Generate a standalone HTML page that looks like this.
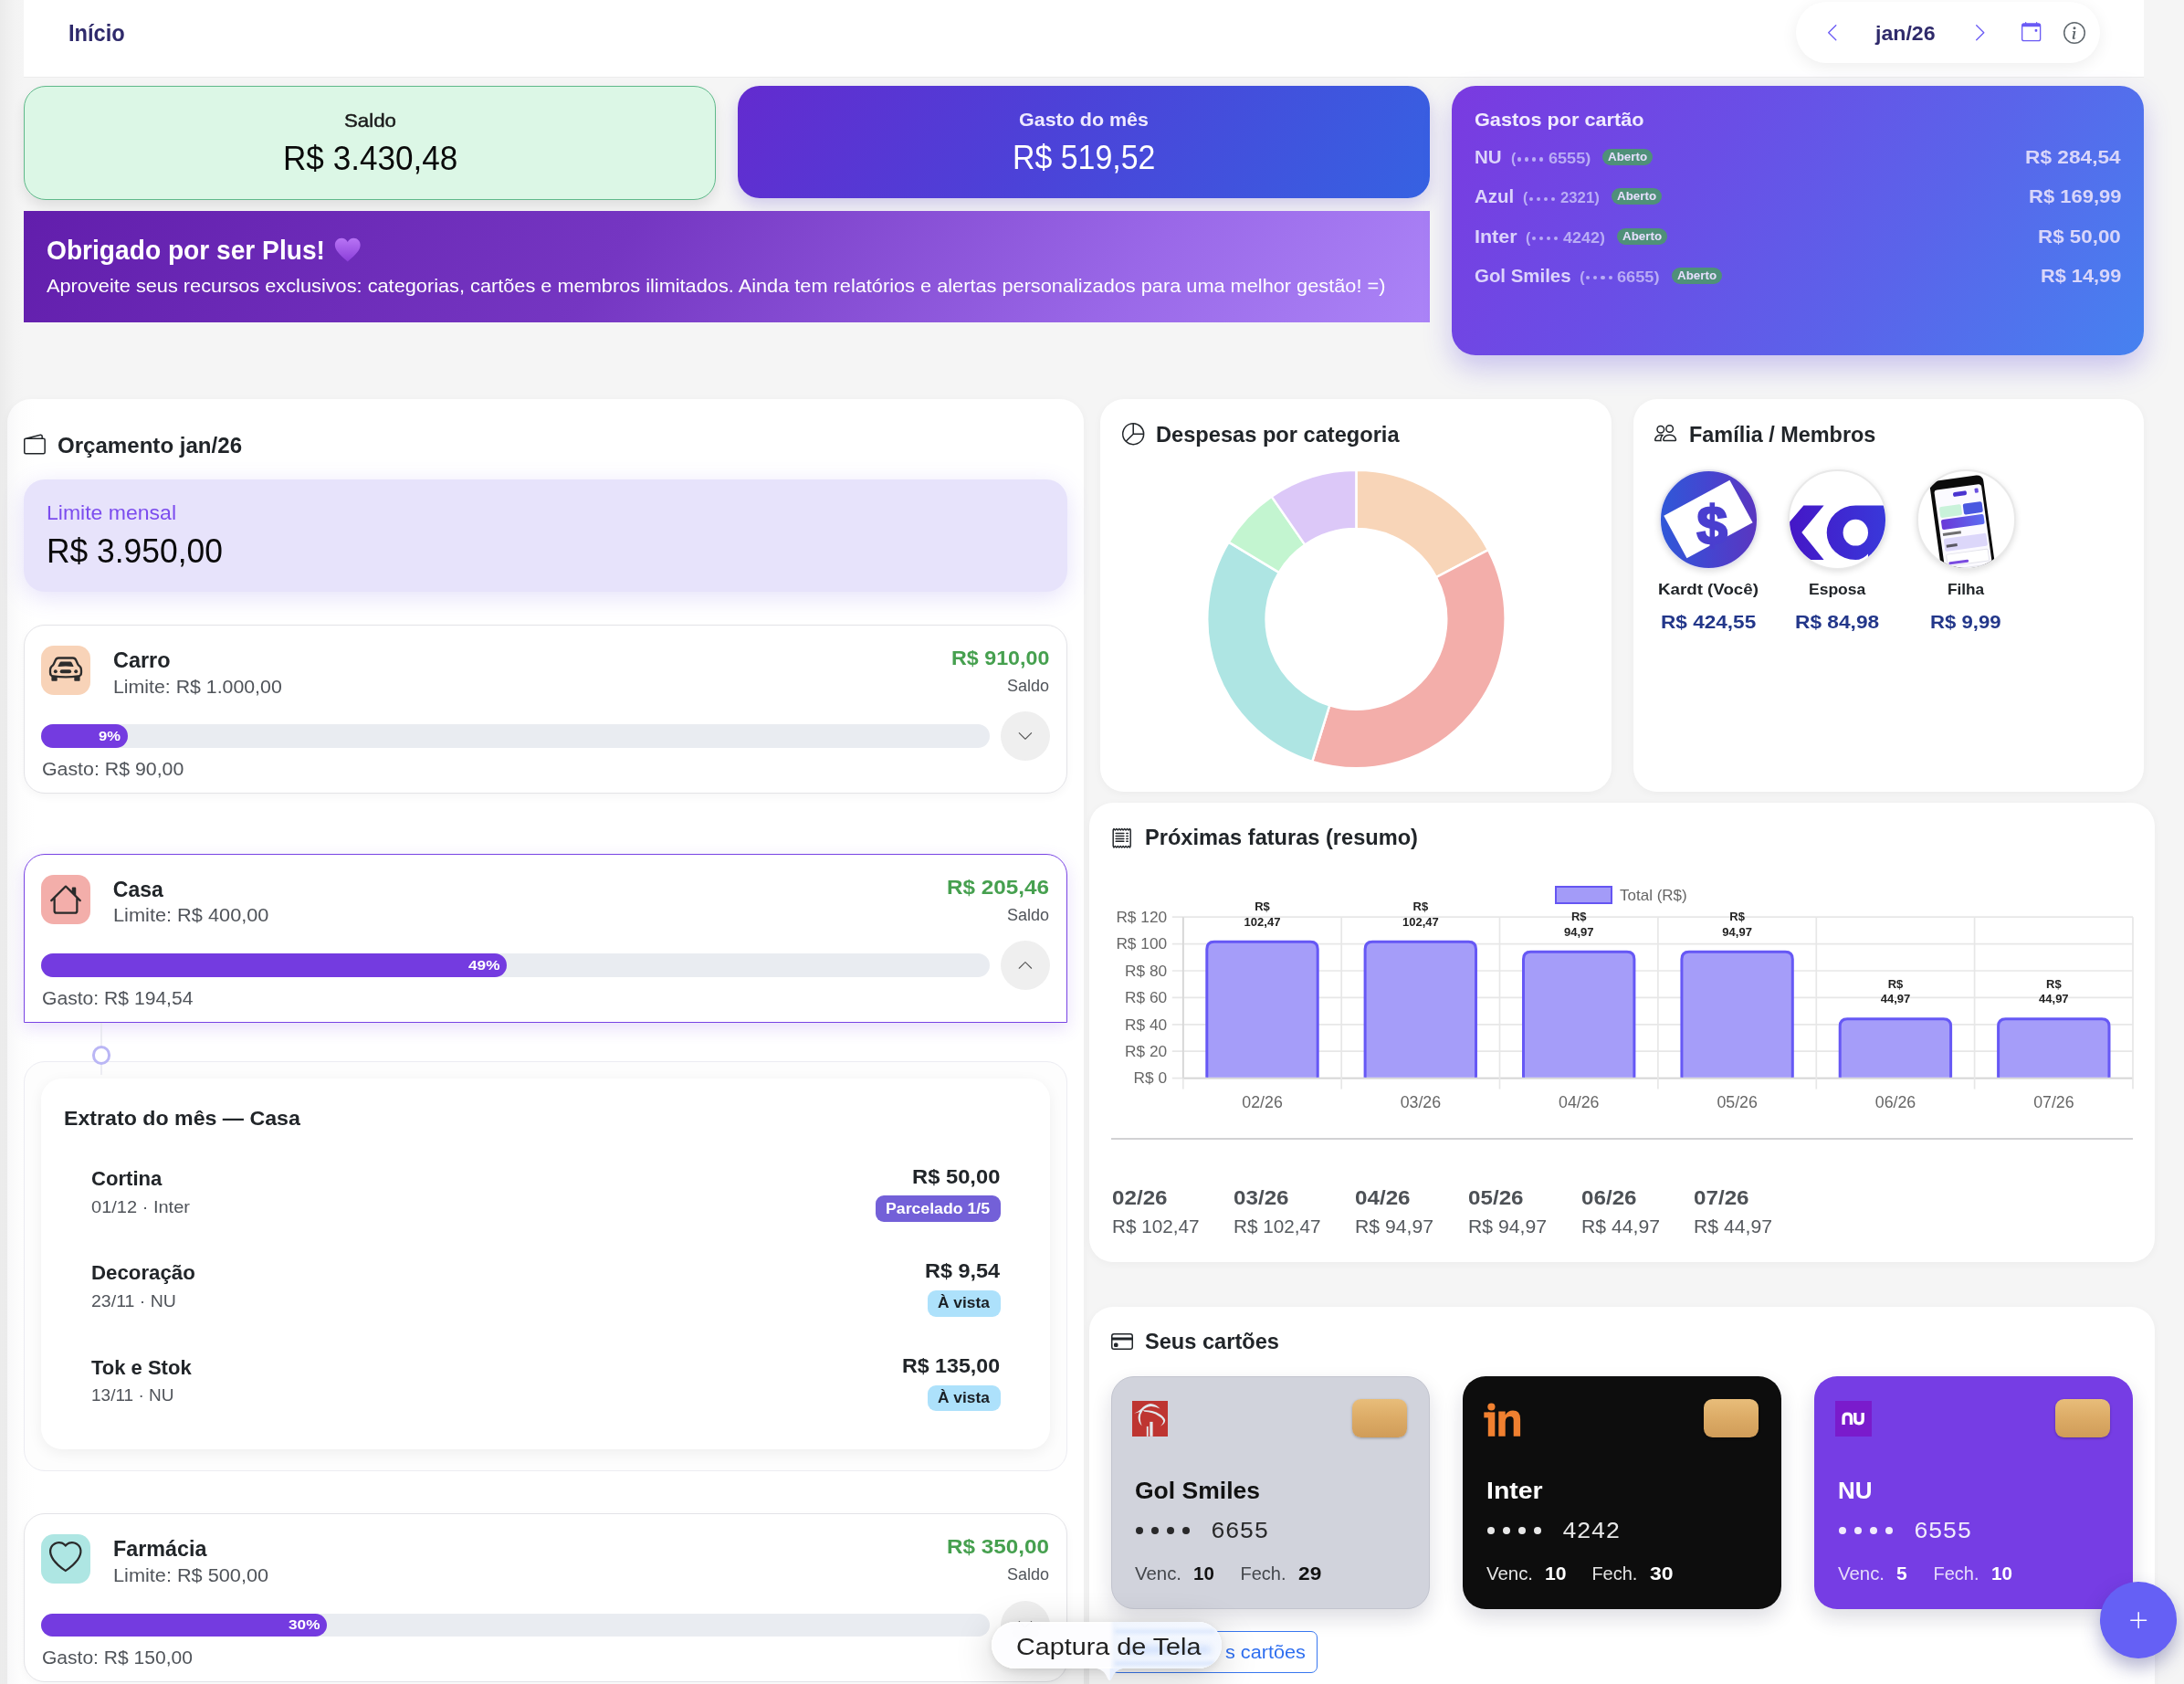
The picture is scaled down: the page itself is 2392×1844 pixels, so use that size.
<!DOCTYPE html>
<html lang="pt-BR"><head><meta charset="utf-8"><title>Inicio</title><style>
*{box-sizing:border-box;margin:0;padding:0}
html,body{width:2392px;height:1844px;overflow:hidden;background:#f5f5f5}
body{font-family:"Liberation Sans",sans-serif;position:relative;will-change:transform}
.t{position:absolute;white-space:nowrap}
.b{position:absolute}
svg{position:absolute;overflow:visible}
</style></head><body>
<div class="b" style="left:0px;top:0px;width:26px;height:1844px;background:linear-gradient(90deg,#ebebeb 0%,#f3f3f3 60%,#f5f5f5 100%);"></div>
<div class="b" style="left:26px;top:0px;width:2322px;height:84.5px;background:#fff;border-bottom:1.5px solid #ececec;"></div>
<div class="t" style="left:74.70px;top:19.30px;font-size:26px;font-weight:700;color:#2f2a6b;line-height:34px;transform:scaleX(0.9105);transform-origin:0 50%;">Início</div>
<div class="b" style="left:1967px;top:2px;width:333px;height:67px;background:#fff;border-radius:34px;box-shadow:0 4px 18px rgba(0,0,0,.07);"></div>
<svg style="left:1995.6px;top:24.5px" width="21.5" height="21.5" viewBox="0 0 16 16" fill="#6a5af5"><path fill-rule="evenodd" d="M11.354 1.646a.5.5 0 0 1 0 .708L5.707 8l5.647 5.646a.5.5 0 0 1-.708.708l-6-6a.5.5 0 0 1 0-.708l6-6a.5.5 0 0 1 .708 0"/></svg>
<div class="t" style="left:2053.98px;top:22.20px;font-size:22.6px;font-weight:700;color:#2f2a6b;line-height:29px;transform:scaleX(1.0233);transform-origin:0 50%;">jan/26</div>
<svg style="left:2157.5px;top:24.5px" width="21.5" height="21.5" viewBox="0 0 16 16" fill="#6a5af5"><path fill-rule="evenodd" d="M4.646 1.646a.5.5 0 0 1 .708 0l6 6a.5.5 0 0 1 0 .708l-6 6a.5.5 0 0 1-.708-.708L10.293 8 4.646 2.354a.5.5 0 0 1 0-.708"/></svg>
<svg style="left:2213.7px;top:24.4px" width="21.3" height="21.3" viewBox="0 0 16 16" fill="#6a5af5"><path d="M11 6.5a.5.5 0 0 1 .5-.5h1a.5.5 0 0 1 .5.5v1a.5.5 0 0 1-.5.5h-1a.5.5 0 0 1-.5-.5z"/><path d="M3.5 0a.5.5 0 0 1 .5.5V1h8V.5a.5.5 0 0 1 1 0V1h1a2 2 0 0 1 2 2v11a2 2 0 0 1-2 2H2a2 2 0 0 1-2-2V3a2 2 0 0 1 2-2h1V.5a.5.5 0 0 1 .5-.5M1 4v10a1 1 0 0 0 1 1h12a1 1 0 0 0 1-1V4z"/></svg>
<svg style="left:2260px;top:24px" width="24" height="24" viewBox="0 0 16 16" fill="#5f676d"><path d="M8 15A7 7 0 1 1 8 1a7 7 0 0 1 0 14m0 1A8 8 0 1 0 8 0a8 8 0 0 0 0 16"/><path d="m8.93 6.588-2.29.287-.082.38.45.083c.294.07.352.176.288.469l-.738 3.468c-.194.897.105 1.319.808 1.319.545 0 1.178-.252 1.465-.598l.088-.416c-.2.176-.492.246-.686.246-.275 0-.375-.193-.304-.533zM9 4.5a1 1 0 1 1-2 0 1 1 0 0 1 2 0"/></svg>
<div class="b" style="left:26px;top:94px;width:758px;height:124.5px;background:#dcf7e6;border:1.3px solid #5fb98a;border-radius:24px;box-shadow:0 7px 14px rgba(0,0,0,.09);"></div>
<div class="t" style="left:376.70px;top:117.70px;font-size:21px;font-weight:400;color:#1a1a1a;line-height:27px;transform:scaleX(1.0605);transform-origin:0 50%;-webkit-text-stroke:.45px #1a1a1a;">Saldo</div>
<div class="t" style="left:309.55px;top:150.00px;font-size:36px;font-weight:400;color:#0a0a0a;line-height:47px;transform:scaleX(0.9754);transform-origin:0 50%;">R$ 3.430,48</div>
<div class="b" style="left:808px;top:94px;width:758px;height:122.5px;background:linear-gradient(125deg,#632bcf 0%,#4c42d8 45%,#3662e2 100%);border-radius:24px;box-shadow:0 8px 18px rgba(80,60,200,.22);"></div>
<div class="t" style="left:1116.20px;top:116.80px;font-size:21px;font-weight:700;color:#eee9ff;line-height:27px;transform:scaleX(1.0225);transform-origin:0 50%;">Gasto do mês</div>
<div class="t" style="left:1109.05px;top:149.20px;font-size:36px;font-weight:400;color:#fff;line-height:47px;transform:scaleX(0.9409);transform-origin:0 50%;">R$ 519,52</div>
<div class="b" style="left:26px;top:231px;width:1540px;height:122px;background:linear-gradient(125deg,#621eac 0%,#7536c2 42%,#9a68e8 78%,#ab84f7 100%);"></div>
<div class="t" style="left:50.80px;top:254.00px;font-size:30px;font-weight:700;color:#fff;line-height:39px;transform:scaleX(0.9381);transform-origin:0 50%;">Obrigado por ser Plus!</div>
<svg style="left:365.5px;top:260px" width="29.5" height="27" viewBox="0 0 29 27"><defs><linearGradient id="hg" x1="0" y1="0" x2="0" y2="1"><stop offset="0" stop-color="#b874f5"/><stop offset="1" stop-color="#8b3fd9"/></linearGradient></defs><path d="M14.5 26.4 C5 18.4 0.6 13.5 0.6 8.2 C0.6 4 3.8 0.8 7.8 0.8 C10.6 0.8 13.2 2.4 14.5 4.9 C15.8 2.4 18.4 0.8 21.2 0.8 C25.2 0.8 28.4 4 28.4 8.2 C28.4 13.5 24 18.4 14.5 26.4Z" fill="url(#hg)"/></svg>
<div class="t" style="left:50.50px;top:299.40px;font-size:21px;font-weight:400;color:#fff;line-height:27px;transform:scaleX(1.0353);transform-origin:0 50%;">Aproveite seus recursos exclusivos: categorias, cartões e membros ilimitados. Ainda tem relatórios e alertas personalizados para uma melhor gestão! =)</div>
<div class="b" style="left:1590px;top:94px;width:758px;height:295px;background:linear-gradient(125deg,#7a3ae0 0%,#6a4ee6 35%,#5a64ea 65%,#4682f0 100%);border-radius:26px;box-shadow:0 14px 30px rgba(90,70,220,.28);"></div>
<div class="t" style="left:1614.50px;top:117.20px;font-size:21px;font-weight:700;color:#f0ebff;line-height:27px;transform:scaleX(1.0320);transform-origin:0 50%;">Gastos por cartão</div>
<div class="t" style="left:1614.50px;top:158.10px;font-size:21px;font-weight:700;color:#dcd3fb;line-height:27px;transform:scaleX(0.9778);transform-origin:0 50%;">NU</div>
<div class="t" style="left:1654.90px;top:163.10px;font-size:16px;font-weight:700;color:#b9acf5;line-height:21px;">(</div>
<div class="b" style="left:1661.9px;top:172.4px;width:4.2px;height:4.2px;background:#b9acf5;border-radius:50%;"></div>
<div class="b" style="left:1670.0px;top:172.4px;width:4.2px;height:4.2px;background:#b9acf5;border-radius:50%;"></div>
<div class="b" style="left:1678.1000000000001px;top:172.4px;width:4.2px;height:4.2px;background:#b9acf5;border-radius:50%;"></div>
<div class="b" style="left:1686.2px;top:172.4px;width:4.2px;height:4.2px;background:#b9acf5;border-radius:50%;"></div>
<div class="t" style="left:1695.50px;top:163.10px;font-size:16px;font-weight:700;color:#b9acf5;line-height:21px;transform:scaleX(1.1303);transform-origin:0 50%;">6555)</div>
<div class="b" style="left:1755px;top:163.1px;width:55px;height:17.8px;background:#4f9079;border-radius:9px;"></div>
<div class="t" style="left:1761.00px;top:164.20px;font-size:12px;font-weight:700;color:#e8e0ff;line-height:16px;transform:scaleX(1.1133);transform-origin:0 50%;">Aberto</div>
<div class="t" style="left:2218.30px;top:158.10px;font-size:21px;font-weight:700;color:#d9d6fa;line-height:27px;transform:scaleX(1.0808);transform-origin:0 50%;">R$ 284,54</div>
<div class="t" style="left:1614.50px;top:201.20px;font-size:21px;font-weight:700;color:#dcd3fb;line-height:27px;transform:scaleX(0.9735);transform-origin:0 50%;">Azul</div>
<div class="t" style="left:1668.00px;top:206.20px;font-size:16px;font-weight:700;color:#b9acf5;line-height:21px;">(</div>
<div class="b" style="left:1675.0px;top:215.5px;width:4.2px;height:4.2px;background:#b9acf5;border-radius:50%;"></div>
<div class="b" style="left:1683.1px;top:215.5px;width:4.2px;height:4.2px;background:#b9acf5;border-radius:50%;"></div>
<div class="b" style="left:1691.2px;top:215.5px;width:4.2px;height:4.2px;background:#b9acf5;border-radius:50%;"></div>
<div class="b" style="left:1699.3px;top:215.5px;width:4.2px;height:4.2px;background:#b9acf5;border-radius:50%;"></div>
<div class="t" style="left:1708.60px;top:206.20px;font-size:16px;font-weight:700;color:#b9acf5;line-height:21px;transform:scaleX(1.0446);transform-origin:0 50%;">2321)</div>
<div class="b" style="left:1765px;top:206.2px;width:55px;height:17.8px;background:#4f9079;border-radius:9px;"></div>
<div class="t" style="left:1771.00px;top:207.30px;font-size:12px;font-weight:700;color:#e8e0ff;line-height:16px;transform:scaleX(1.1133);transform-origin:0 50%;">Aberto</div>
<div class="t" style="left:2221.50px;top:201.20px;font-size:21px;font-weight:700;color:#d9d6fa;line-height:27px;transform:scaleX(1.0477);transform-origin:0 50%;">R$ 169,99</div>
<div class="t" style="left:1614.50px;top:245.00px;font-size:21px;font-weight:700;color:#dcd3fb;line-height:27px;transform:scaleX(1.0220);transform-origin:0 50%;">Inter</div>
<div class="t" style="left:1671.00px;top:250.00px;font-size:16px;font-weight:700;color:#b9acf5;line-height:21px;">(</div>
<div class="b" style="left:1678.0px;top:259.29999999999995px;width:4.2px;height:4.2px;background:#b9acf5;border-radius:50%;"></div>
<div class="b" style="left:1686.1px;top:259.29999999999995px;width:4.2px;height:4.2px;background:#b9acf5;border-radius:50%;"></div>
<div class="b" style="left:1694.2px;top:259.29999999999995px;width:4.2px;height:4.2px;background:#b9acf5;border-radius:50%;"></div>
<div class="b" style="left:1702.3px;top:259.29999999999995px;width:4.2px;height:4.2px;background:#b9acf5;border-radius:50%;"></div>
<div class="t" style="left:1711.60px;top:250.00px;font-size:16px;font-weight:700;color:#b9acf5;line-height:21px;transform:scaleX(1.1205);transform-origin:0 50%;">4242)</div>
<div class="b" style="left:1771px;top:250.0px;width:55px;height:17.8px;background:#4f9079;border-radius:9px;"></div>
<div class="t" style="left:1777.00px;top:251.10px;font-size:12px;font-weight:700;color:#e8e0ff;line-height:16px;transform:scaleX(1.1133);transform-origin:0 50%;">Aberto</div>
<div class="t" style="left:2232.20px;top:245.00px;font-size:21px;font-weight:700;color:#d9d6fa;line-height:27px;transform:scaleX(1.0651);transform-origin:0 50%;">R$ 50,00</div>
<div class="t" style="left:1614.50px;top:288.00px;font-size:21px;font-weight:700;color:#dcd3fb;line-height:27px;transform:scaleX(0.9724);transform-origin:0 50%;">Gol Smiles</div>
<div class="t" style="left:1730.20px;top:293.00px;font-size:16px;font-weight:700;color:#b9acf5;line-height:21px;">(</div>
<div class="b" style="left:1737.2px;top:302.29999999999995px;width:4.2px;height:4.2px;background:#b9acf5;border-radius:50%;"></div>
<div class="b" style="left:1745.3px;top:302.29999999999995px;width:4.2px;height:4.2px;background:#b9acf5;border-radius:50%;"></div>
<div class="b" style="left:1753.4px;top:302.29999999999995px;width:4.2px;height:4.2px;background:#b9acf5;border-radius:50%;"></div>
<div class="b" style="left:1761.5px;top:302.29999999999995px;width:4.2px;height:4.2px;background:#b9acf5;border-radius:50%;"></div>
<div class="t" style="left:1770.80px;top:293.00px;font-size:16px;font-weight:700;color:#b9acf5;line-height:21px;transform:scaleX(1.1352);transform-origin:0 50%;">6655)</div>
<div class="b" style="left:1831px;top:293.0px;width:55px;height:17.8px;background:#4f9079;border-radius:9px;"></div>
<div class="t" style="left:1837.00px;top:294.10px;font-size:12px;font-weight:700;color:#e8e0ff;line-height:16px;transform:scaleX(1.1133);transform-origin:0 50%;">Aberto</div>
<div class="t" style="left:2234.70px;top:288.00px;font-size:21px;font-weight:700;color:#d9d6fa;line-height:27px;transform:scaleX(1.0358);transform-origin:0 50%;">R$ 14,99</div>
<div class="b" style="left:8px;top:437px;width:1179.2px;height:1500px;background:linear-gradient(90deg,#f8f8f9 0,#fdfdfd 14px,#fff 30px);border-radius:26px;box-shadow:0 2px 10px rgba(0,0,0,.04);"></div>
<svg style="left:26.1px;top:475.1px" width="23.9" height="23.9" viewBox="0 0 16 16" fill="#212529"><path d="M12.136.326A1.5 1.5 0 0 1 14 1.78V3h.5A1.5 1.5 0 0 1 16 4.5v9a1.5 1.5 0 0 1-1.5 1.5h-13A1.5 1.5 0 0 1 0 13.5v-9a1.5 1.5 0 0 1 1.432-1.499zM5.562 3H13V1.78a.5.5 0 0 0-.621-.484zM1.5 4a.5.5 0 0 0-.5.5v9a.5.5 0 0 0 .5.5h13a.5.5 0 0 0 .5-.5v-9a.5.5 0 0 0-.5-.5z"/></svg>
<div class="t" style="left:63.10px;top:472.80px;font-size:23px;font-weight:700;color:#212529;line-height:30px;transform:scaleX(1.0466);transform-origin:0 50%;">Orçamento jan/26</div>
<div class="b" style="left:26px;top:525px;width:1143px;height:122.5px;background:#e7e3fb;border-radius:23px;box-shadow:0 6px 26px rgba(125,105,230,.2);"></div>
<div class="t" style="left:51.20px;top:548.00px;font-size:21.5px;font-weight:400;color:#7c4dee;line-height:28px;transform:scaleX(1.0707);transform-origin:0 50%;">Limite mensal</div>
<div class="t" style="left:51.20px;top:579.80px;font-size:36px;font-weight:400;color:#0a0a0a;line-height:47px;transform:scaleX(0.9830);transform-origin:0 50%;">R$ 3.950,00</div>
<div class="b" style="left:26px;top:684.2px;width:1143px;height:184.5px;background:#fff;border:1.3px solid #e3e3e7;border-radius:23px;box-shadow:0 4px 10px rgba(0,0,0,.035);"></div>
<div class="b" style="left:45px;top:707.0px;width:54px;height:54px;background:#f8d3b8;border-radius:14px;"><svg style="left:0;top:0" width="54" height="54" viewBox="0 0 54 54">
<path d="M19.1 13.5 H34.9 Q37.2 13.5 38.3 16 L40.2 20.2 Q40.8 21.5 42.4 22.7 Q44 24.1 44 27 V29.4 Q44 33 40.6 33.4 Q27 35.4 13.4 33.4 Q10 33 10 29.4 V27 Q10 24.1 11.6 22.7 Q13.2 21.5 13.8 20.2 L15.7 16 Q16.8 13.5 19.1 13.5Z" fill="none" stroke="#2d2d2d" stroke-width="2.3" stroke-linejoin="round"/>
<path d="M21.9 17.5 H32.1 Q33 17.5 33.4 18.3 L35.5 22.2 Q35.9 23.1 34.8 23 Q27 22 19.2 23 Q18.1 23.1 18.5 22.2 L20.6 18.3 Q21 17.5 21.9 17.5Z" fill="#2d2d2d"/>
<circle cx="15.8" cy="28.3" r="1.95" fill="#2d2d2d"/><circle cx="38.2" cy="28.3" r="1.95" fill="#2d2d2d"/>
<rect x="20.7" y="26.3" width="12.4" height="4" rx="2" fill="#2d2d2d"/>
<path d="M11.4 33.2 H17.7 V38.1 Q17.7 38.8 17 38.8 H12.1 Q11.4 38.8 11.4 38.1Z M36.3 33.2 H42.6 V38.1 Q42.6 38.8 41.9 38.8 H37 Q36.3 38.8 36.3 38.1Z" fill="#2d2d2d"/>
</svg></div>
<div class="t" style="left:123.80px;top:707.70px;font-size:23px;font-weight:700;color:#212529;line-height:30px;transform:scaleX(1.0183);transform-origin:0 50%;">Carro</div>
<div class="t" style="left:123.80px;top:737.60px;font-size:20.5px;font-weight:400;color:#50545a;line-height:27px;transform:scaleX(1.0391);transform-origin:0 50%;">Limite: R$ 1.000,00</div>
<div class="t" style="left:1041.60px;top:705.70px;font-size:22px;font-weight:700;color:#46a04f;line-height:29px;transform:scaleX(1.0581);transform-origin:0 50%;">R$ 910,00</div>
<div class="t" style="left:1103.00px;top:739.70px;font-size:18px;font-weight:400;color:#50545a;line-height:23px;">Saldo</div>
<div class="b" style="left:45px;top:793.4000000000001px;width:1039px;height:25.6px;background:#e9ecf1;border-radius:13px;"></div>
<div class="b" style="left:45px;top:793.4000000000001px;width:94.5px;height:25.6px;background:#743be0;border-radius:13px;"></div>
<div class="t" style="left:108.20px;top:796.90px;font-size:14.5px;font-weight:700;color:#fff;line-height:19px;transform:scaleX(1.1429);transform-origin:0 50%;">9%</div>
<div class="b" style="left:1096px;top:779.4000000000001px;width:54px;height:54px;background:#efefef;border-radius:50%;"></div>
<svg style="left:1114.1px;top:796.8000000000001px" width="17.85" height="17.85" viewBox="0 0 16 16" fill="#555"><path fill-rule="evenodd" d="M1.646 4.646a.5.5 0 0 1 .708 0L8 10.293l5.646-5.647a.5.5 0 0 1 .708.708l-6 6a.5.5 0 0 1-.708 0l-6-6a.5.5 0 0 1 0-.708"/></svg>
<div class="t" style="left:46.00px;top:828.00px;font-size:20.5px;font-weight:400;color:#50545a;line-height:27px;transform:scaleX(1.0405);transform-origin:0 50%;">Gasto: R$ 90,00</div>
<div class="b" style="left:26px;top:935px;width:1143px;height:184.5px;background:#fff;border:1.6px solid #7944e4;border-radius:23px 23px 0 0;box-shadow:0 6px 18px rgba(117,64,230,.17);"></div>
<div class="b" style="left:45px;top:957.8px;width:54px;height:54px;background:#f3aeaa;border-radius:14px;"><svg style="left:9.1px;top:9.2px" width="36" height="36" viewBox="0 0 16 16" fill="#2a2a2a"><path d="M8.707 1.5a1 1 0 0 0-1.414 0L.646 8.146a.5.5 0 0 0 .708.708L2 8.207V13.5A1.5 1.5 0 0 0 3.5 15h9a1.5 1.5 0 0 0 1.5-1.5V8.207l.646.647a.5.5 0 0 0 .708-.708L13 5.793V2.5a.5.5 0 0 0-.5-.5h-1a.5.5 0 0 0-.5.5v1.293zM13 7.207V13.5a.5.5 0 0 1-.5.5h-9a.5.5 0 0 1-.5-.5V7.207l5-5z"/></svg></div>
<div class="t" style="left:123.80px;top:958.50px;font-size:23px;font-weight:700;color:#212529;line-height:30px;">Casa</div>
<div class="t" style="left:123.80px;top:988.40px;font-size:20.5px;font-weight:400;color:#50545a;line-height:27px;transform:scaleX(1.0609);transform-origin:0 50%;">Limite: R$ 400,00</div>
<div class="t" style="left:1037.00px;top:956.50px;font-size:22px;font-weight:700;color:#46a04f;line-height:29px;transform:scaleX(1.1034);transform-origin:0 50%;">R$ 205,46</div>
<div class="t" style="left:1103.00px;top:990.50px;font-size:18px;font-weight:400;color:#50545a;line-height:23px;">Saldo</div>
<div class="b" style="left:45px;top:1044.2px;width:1039px;height:25.6px;background:#e9ecf1;border-radius:13px;"></div>
<div class="b" style="left:45px;top:1044.2px;width:509.5px;height:25.6px;background:#743be0;border-radius:13px;"></div>
<div class="t" style="left:512.80px;top:1047.70px;font-size:14.5px;font-weight:700;color:#fff;line-height:19px;transform:scaleX(1.1862);transform-origin:0 50%;">49%</div>
<div class="b" style="left:1096px;top:1030.2px;width:54px;height:54px;background:#efefef;border-radius:50%;"></div>
<svg style="left:1114.1px;top:1047.6px" width="17.85" height="17.85" viewBox="0 0 16 16" fill="#555"><path fill-rule="evenodd" d="M7.646 4.646a.5.5 0 0 1 .708 0l6 6a.5.5 0 0 1-.708.708L8 5.707l-5.646 5.647a.5.5 0 0 1-.708-.708z"/></svg>
<div class="t" style="left:46.00px;top:1078.80px;font-size:20.5px;font-weight:400;color:#50545a;line-height:27px;transform:scaleX(1.0297);transform-origin:0 50%;">Gasto: R$ 194,54</div>
<div class="b" style="left:26px;top:1162.3px;width:1143px;height:449px;background:#fdfdfd;border:1.3px solid #ececf2;border-radius:23px;"></div>
<div class="b" style="left:45px;top:1180.6px;width:1105px;height:406px;background:#fff;border-radius:23px;box-shadow:0 4px 16px rgba(0,0,0,.06);"></div>
<div class="b" style="left:109.8px;top:1119.5px;width:2.4px;height:26px;background:linear-gradient(180deg,#e6e6ee,#f0f0f5);"></div>
<div class="b" style="left:109.8px;top:1165px;width:2.4px;height:11.5px;background:#ececf2;"></div>
<div class="b" style="left:100.6px;top:1145.2px;width:20.8px;height:20.8px;background:#fff;border:3.2px solid #bab6f5;border-radius:50%;"></div>
<div class="t" style="left:70.00px;top:1209.50px;font-size:22.5px;font-weight:700;color:#212529;line-height:29px;transform:scaleX(1.0301);transform-origin:0 50%;">Extrato do mês — Casa</div>
<div class="t" style="left:100.00px;top:1275.80px;font-size:22px;font-weight:700;color:#212529;line-height:29px;transform:scaleX(1.0049);transform-origin:0 50%;">Cortina</div>
<div class="t" style="left:100.00px;top:1308.70px;font-size:19px;font-weight:400;color:#50545a;line-height:25px;transform:scaleX(1.0537);transform-origin:0 50%;">01/12 · Inter</div>
<div class="t" style="left:998.80px;top:1274.00px;font-size:22px;font-weight:700;color:#212529;line-height:29px;transform:scaleX(1.0790);transform-origin:0 50%;">R$ 50,00</div>
<div class="b" style="left:958.9px;top:1309.1px;width:137.2px;height:28.7px;background:#7360d8;border-radius:9px;"></div>
<div class="t" style="left:970.30px;top:1312.50px;font-size:16px;font-weight:700;color:#fff;line-height:21px;transform:scaleX(1.1055);transform-origin:0 50%;">Parcelado 1/5</div>
<div class="t" style="left:100.00px;top:1379.00px;font-size:22px;font-weight:700;color:#212529;line-height:29px;transform:scaleX(1.0116);transform-origin:0 50%;">Decoração</div>
<div class="t" style="left:100.00px;top:1411.90px;font-size:19px;font-weight:400;color:#50545a;line-height:25px;transform:scaleX(1.0276);transform-origin:0 50%;">23/11 · NU</div>
<div class="t" style="left:1013.10px;top:1377.20px;font-size:22px;font-weight:700;color:#212529;line-height:29px;transform:scaleX(1.0649);transform-origin:0 50%;">R$ 9,54</div>
<div class="b" style="left:1016.1px;top:1413.0px;width:80px;height:28.8px;background:#ade1fb;border-radius:9px;"></div>
<div class="t" style="left:1027.30px;top:1416.40px;font-size:16px;font-weight:700;color:#1a1f24;line-height:21px;transform:scaleX(1.0831);transform-origin:0 50%;">À vista</div>
<div class="t" style="left:100.00px;top:1482.50px;font-size:22px;font-weight:700;color:#212529;line-height:29px;">Tok e Stok</div>
<div class="t" style="left:100.00px;top:1515.40px;font-size:19px;font-weight:400;color:#50545a;line-height:25px;">13/11 · NU</div>
<div class="t" style="left:988.10px;top:1480.70px;font-size:22px;font-weight:700;color:#212529;line-height:29px;transform:scaleX(1.0542);transform-origin:0 50%;">R$ 135,00</div>
<div class="b" style="left:1016.1px;top:1516.5px;width:80px;height:28.8px;background:#ade1fb;border-radius:9px;"></div>
<div class="t" style="left:1027.30px;top:1519.90px;font-size:16px;font-weight:700;color:#1a1f24;line-height:21px;transform:scaleX(1.0831);transform-origin:0 50%;">À vista</div>
<div class="b" style="left:26px;top:1657.4px;width:1143px;height:184.5px;background:#fff;border:1.3px solid #e3e3e7;border-radius:23px;box-shadow:0 4px 10px rgba(0,0,0,.035);"></div>
<div class="b" style="left:45px;top:1680.2px;width:54px;height:54px;background:#aee6e3;border-radius:14px;"><svg style="left:9.3px;top:7.5px" width="35.6" height="35.6" viewBox="0 0 16 16"><path fill="#2a2a2a" fill-rule="evenodd" d="m8 2.748-.717-.737C5.6.281 2.514.878 1.4 3.053c-.523 1.023-.641 2.5.314 4.385.92 1.815 2.834 3.989 6.286 6.357 3.452-2.368 5.365-4.542 6.286-6.357.955-1.886.838-3.362.314-4.385C13.486.878 10.4.28 8.717 2.01zM8 15C-7.333 4.868 3.279-3.04 7.824 1.143q.09.083.176.171a3 3 0 0 1 .176-.17C12.72-3.042 23.333 4.867 8 15"/></svg></div>
<div class="t" style="left:123.80px;top:1680.90px;font-size:23px;font-weight:700;color:#212529;line-height:30px;transform:scaleX(1.0133);transform-origin:0 50%;">Farmácia</div>
<div class="t" style="left:123.80px;top:1710.80px;font-size:20.5px;font-weight:400;color:#50545a;line-height:27px;transform:scaleX(1.0584);transform-origin:0 50%;">Limite: R$ 500,00</div>
<div class="t" style="left:1037.00px;top:1678.90px;font-size:22px;font-weight:700;color:#46a04f;line-height:29px;transform:scaleX(1.1034);transform-origin:0 50%;">R$ 350,00</div>
<div class="t" style="left:1103.00px;top:1712.90px;font-size:18px;font-weight:400;color:#50545a;line-height:23px;">Saldo</div>
<div class="b" style="left:45px;top:1766.6000000000001px;width:1039px;height:25.6px;background:#e9ecf1;border-radius:13px;"></div>
<div class="b" style="left:45px;top:1766.6000000000001px;width:312.5px;height:25.6px;background:#743be0;border-radius:13px;"></div>
<div class="t" style="left:315.80px;top:1770.10px;font-size:14.5px;font-weight:700;color:#fff;line-height:19px;transform:scaleX(1.1862);transform-origin:0 50%;">30%</div>
<div class="b" style="left:1096px;top:1752.6000000000001px;width:54px;height:54px;background:#efefef;border-radius:50%;"></div>
<svg style="left:1114.1px;top:1770.0px" width="17.85" height="17.85" viewBox="0 0 16 16" fill="#555"><path fill-rule="evenodd" d="M1.646 4.646a.5.5 0 0 1 .708 0L8 10.293l5.646-5.647a.5.5 0 0 1 .708.708l-6 6a.5.5 0 0 1-.708 0l-6-6a.5.5 0 0 1 0-.708"/></svg>
<div class="t" style="left:46.00px;top:1801.20px;font-size:20.5px;font-weight:400;color:#50545a;line-height:27px;transform:scaleX(1.0260);transform-origin:0 50%;">Gasto: R$ 150,00</div>
<div class="b" style="left:1205px;top:437px;width:560px;height:430px;background:#fff;border-radius:26px;box-shadow:0 2px 10px rgba(0,0,0,.04);"></div>
<svg style="left:1228.7px;top:463.1px" width="24.4" height="24.4" viewBox="0 0 16 16" fill="#212529"><path d="M7.5 1.018a7 7 0 0 0-4.79 11.566L7.5 7.793zm1 0V7.5h6.482A7 7 0 0 0 8.5 1.018M14.982 8.5H8.207l-4.79 4.79A7 7 0 0 0 14.982 8.5M0 8a8 8 0 1 1 16 0A8 8 0 0 1 0 8"/></svg>
<div class="t" style="left:1266.40px;top:460.80px;font-size:23px;font-weight:700;color:#212529;line-height:30px;transform:scaleX(1.0271);transform-origin:0 50%;">Despesas por categoria</div>
<svg style="left:0;top:0" width="2392" height="1844" viewBox="0 0 2392 1844"><path d="M1485.40 514.70 A163.2 163.2 0 0 1 1629.98 602.20 L1572.93 632.07 A98.8 98.8 0 0 0 1485.40 579.10Z" fill="#f8d5b8" stroke="#fff" stroke-width="2.5" stroke-linejoin="round"/><path d="M1629.98 602.20 A163.2 163.2 0 0 1 1437.22 833.83 L1456.23 772.30 A98.8 98.8 0 0 0 1572.93 632.07Z" fill="#f3aeaa" stroke="#fff" stroke-width="2.5" stroke-linejoin="round"/><path d="M1437.22 833.83 A163.2 163.2 0 0 1 1345.68 593.57 L1400.81 626.85 A98.8 98.8 0 0 0 1456.23 772.30Z" fill="#aee5e3" stroke="#fff" stroke-width="2.5" stroke-linejoin="round"/><path d="M1345.68 593.57 A163.2 163.2 0 0 1 1392.65 543.62 L1429.25 596.61 A98.8 98.8 0 0 0 1400.81 626.85Z" fill="#c3f5d0" stroke="#fff" stroke-width="2.5" stroke-linejoin="round"/><path d="M1392.65 543.62 A163.2 163.2 0 0 1 1485.40 514.70 L1485.40 579.10 A98.8 98.8 0 0 0 1429.25 596.61Z" fill="#dcc8f8" stroke="#fff" stroke-width="2.5" stroke-linejoin="round"/></svg>
<div class="b" style="left:1789px;top:437px;width:559px;height:430px;background:#fff;border-radius:26px;box-shadow:0 2px 10px rgba(0,0,0,.04);"></div>
<svg style="left:1812.4px;top:462.4px" width="24.2" height="24.2" viewBox="0 0 16 16" fill="#212529"><path d="M15 14s1 0 1-1-1-4-5-4-5 3-5 4 1 1 1 1zm-7.978-1L7 12.996c.001-.264.167-1.03.76-1.72C8.312 10.629 9.282 10 11 10c1.717 0 2.687.63 3.24 1.276.593.69.758 1.457.76 1.72l-.008.002-.014.002zM11 7a2 2 0 1 0 0-4 2 2 0 0 0 0 4m3-2a3 3 0 1 1-6 0 3 3 0 0 1 6 0M6.936 9.28a6 6 0 0 0-1.23-.247A7 7 0 0 0 5 9c-4 0-5 3-5 4q0 1 1 1h4.216A2.24 2.24 0 0 1 5 13c0-1.01.377-2.042 1.09-2.904.243-.294.526-.569.846-.816M4.92 10A5.5 5.5 0 0 0 4 13H1c0-.26.164-1.03.76-1.724.545-.636 1.492-1.256 3.16-1.275ZM1.5 5.5a3 3 0 1 1 6 0 3 3 0 0 1-6 0m3-2a2 2 0 1 0 0 4 2 2 0 0 0 0-4"/></svg>
<div class="t" style="left:1849.60px;top:461.20px;font-size:23px;font-weight:700;color:#212529;line-height:30px;transform:scaleX(1.0183);transform-origin:0 50%;">Família / Membros</div>
<div class="t" style="left:1815.80px;top:634.70px;font-size:17px;font-weight:700;color:#212529;line-height:22px;transform:scaleX(1.1014);transform-origin:0 50%;">Kardt (Você)</div>
<div class="t" style="left:1818.70px;top:666.50px;font-size:21px;font-weight:700;color:#23378a;line-height:27px;transform:scaleX(1.0756);transform-origin:0 50%;">R$ 424,55</div>
<div class="t" style="left:1981.00px;top:634.70px;font-size:17px;font-weight:700;color:#212529;line-height:22px;transform:scaleX(1.0293);transform-origin:0 50%;">Esposa</div>
<div class="t" style="left:1966.10px;top:666.50px;font-size:21px;font-weight:700;color:#23378a;line-height:27px;transform:scaleX(1.0815);transform-origin:0 50%;">R$ 84,98</div>
<div class="t" style="left:2132.90px;top:634.70px;font-size:17px;font-weight:700;color:#212529;line-height:22px;transform:scaleX(1.0132);transform-origin:0 50%;">Filha</div>
<div class="t" style="left:2114.30px;top:666.50px;font-size:21px;font-weight:700;color:#23378a;line-height:27px;transform:scaleX(1.0558);transform-origin:0 50%;">R$ 9,99</div>
<div class="b" style="left:1816.5px;top:514.2px;width:109.4px;height:109.4px;border-radius:50%;border:2.4px solid #e9e9e9;box-shadow:0 2px 7px rgba(0,0,0,.13);overflow:hidden;border-color:#e4e4ee;background:linear-gradient(90deg,#2f58d8 0%,#4545d0 50%,#5a36c0 100%);"><div style="position:absolute;left:11.3px;top:25.6px;width:82px;height:53.2px;background:#fff;transform:rotate(-28.4deg);"></div><div style="position:absolute;left:0;top:0;width:104.6px;height:104.6px;text-align:center;padding-left:9px;line-height:119px;font-size:60px;font-weight:700;color:#4a3fcf;-webkit-text-stroke:2.4px #4a3fcf;">$</div></div>
<div class="b" style="left:1957.6px;top:514.2px;width:109.4px;height:109.4px;border-radius:50%;border:2.4px solid #e9e9e9;box-shadow:0 2px 7px rgba(0,0,0,.13);overflow:hidden;background:#fff;"><svg style="left:0;top:0" width="104.6" height="104.6" viewBox="2 1.6 104.6 104.6"><defs><linearGradient id="kg" gradientUnits="userSpaceOnUse" x1="0" y1="0" x2="107" y2="0"><stop offset="0" stop-color="#4516c6"/><stop offset="1" stop-color="#3938da"/></linearGradient></defs><path d="M17.4 39.2 H39.6 L15.3 68.6 L39.6 98.6 H17.4 L-8 68.9Z" fill="url(#kg)"/><path d="M74.3 39.2 H110 V98.6 H88 V92 Q82 98.6 74.3 98.6 A31.6 29.7 0 0 1 74.3 39.2Z" fill="url(#kg)"/><ellipse cx="74.3" cy="68.8" rx="13.7" ry="14.4" fill="#fff"/></svg></div>
<div class="b" style="left:2098.7px;top:514.2px;width:109.4px;height:109.4px;border-radius:50%;border:2.4px solid #e9e9e9;box-shadow:0 2px 7px rgba(0,0,0,.13);overflow:hidden;background:#fff;"><div style="position:absolute;left:20.5px;top:7px;width:59px;height:122px;background:#0b0b0b;border-radius:7px;transform:rotate(-7.9deg);"><div style="position:absolute;left:3.5px;top:10px;width:52px;height:110px;background:#fbfaff;border-radius:3px;overflow:hidden"><div style="position:absolute;left:20px;top:5px;width:15px;height:4.5px;background:#4a35d0;border-radius:2px"></div><div style="position:absolute;left:44px;top:4px;width:4.5px;height:4.5px;background:#6a50e0;border-radius:1px"></div><div style="position:absolute;left:3px;top:19px;width:24px;height:12px;background:#c9f2da;border-radius:2px"></div><div style="position:absolute;left:29px;top:19px;width:21px;height:12px;background:#4a58e0;border-radius:2px"></div><div style="position:absolute;left:3px;top:33px;width:47px;height:11px;background:linear-gradient(90deg,#6a38d8,#5c6cf0);border-radius:2px"></div><div style="position:absolute;left:3px;top:48px;width:20px;height:3px;background:#333;opacity:.7"></div><div style="position:absolute;left:3px;top:54px;width:47px;height:14px;background:#dcd7fa;border-radius:2px"></div><div style="position:absolute;left:5px;top:61px;width:12px;height:3px;background:#222;opacity:.7"></div><div style="position:absolute;left:3px;top:71px;width:47px;height:14px;background:#fff;border:1px solid #e2e2ea;border-radius:2px"></div><div style="position:absolute;left:5px;top:80px;width:22px;height:2.5px;background:#7a4ce0;border-radius:2px"></div><div style="position:absolute;left:3px;top:88px;width:47px;height:14px;background:#fff;border:1px solid #e2e2ea;border-radius:2px"></div></div></div></div>
<div class="b" style="left:1193px;top:879px;width:1167px;height:503px;background:#fff;border-radius:26px;box-shadow:0 2px 10px rgba(0,0,0,.04);"></div>
<svg style="left:1216.9px;top:905.6px" width="23.4" height="23.4" viewBox="0 0 16 16" fill="#212529"><path d="M1.92.506a.5.5 0 0 1 .434.14L3 1.293l.646-.647a.5.5 0 0 1 .708 0L5 1.293l.646-.647a.5.5 0 0 1 .708 0L7 1.293l.646-.647a.5.5 0 0 1 .708 0L9 1.293l.646-.647a.5.5 0 0 1 .708 0l.646.647.646-.647a.5.5 0 0 1 .708 0l.646.647.646-.647a.5.5 0 0 1 .801.13l.5 1A.5.5 0 0 1 15 2v12a.5.5 0 0 1-.053.224l-.5 1a.5.5 0 0 1-.8.13L13 14.707l-.646.647a.5.5 0 0 1-.708 0L11 14.707l-.646.647a.5.5 0 0 1-.708 0L9 14.707l-.646.647a.5.5 0 0 1-.708 0L7 14.707l-.646.647a.5.5 0 0 1-.708 0L5 14.707l-.646.647a.5.5 0 0 1-.708 0L3 14.707l-.646.647a.5.5 0 0 1-.801-.13l-.5-1A.5.5 0 0 1 1 14V2a.5.5 0 0 1 .053-.224l.5-1a.5.5 0 0 1 .367-.27m.217 1.338L2 2.118v11.764l.137.274.51-.51a.5.5 0 0 1 .707 0l.646.647.646-.646a.5.5 0 0 1 .708 0l.646.646.646-.646a.5.5 0 0 1 .708 0l.646.646.646-.646a.5.5 0 0 1 .708 0l.646.646.646-.646a.5.5 0 0 1 .708 0l.646.646.646-.646a.5.5 0 0 1 .708 0l.509.509.137-.274V2.118l-.137-.274-.51.51a.5.5 0 0 1-.707 0L12 1.707l-.646.647a.5.5 0 0 1-.708 0L10 1.707l-.646.647a.5.5 0 0 1-.708 0L8 1.707l-.646.647a.5.5 0 0 1-.708 0L6 1.707l-.646.647a.5.5 0 0 1-.708 0L4 1.707l-.646.647a.5.5 0 0 1-.708 0z"/><path d="M3 4.5a.5.5 0 0 1 .5-.5h6a.5.5 0 1 1 0 1h-6a.5.5 0 0 1-.5-.5m0 2a.5.5 0 0 1 .5-.5h6a.5.5 0 1 1 0 1h-6a.5.5 0 0 1-.5-.5m0 2a.5.5 0 0 1 .5-.5h6a.5.5 0 1 1 0 1h-6a.5.5 0 0 1-.5-.5m0 2a.5.5 0 0 1 .5-.5h6a.5.5 0 0 1 0 1h-6a.5.5 0 0 1-.5-.5m8-6a.5.5 0 0 1 .5-.5h1a.5.5 0 0 1 0 1h-1a.5.5 0 0 1-.5-.5m0 2a.5.5 0 0 1 .5-.5h1a.5.5 0 0 1 0 1h-1a.5.5 0 0 1-.5-.5m0 2a.5.5 0 0 1 .5-.5h1a.5.5 0 0 1 0 1h-1a.5.5 0 0 1-.5-.5m0 2a.5.5 0 0 1 .5-.5h1a.5.5 0 0 1 0 1h-1a.5.5 0 0 1-.5-.5"/></svg>
<div class="t" style="left:1254.10px;top:902.30px;font-size:23px;font-weight:700;color:#212529;line-height:30px;transform:scaleX(1.0258);transform-origin:0 50%;">Próximas faturas (resumo)</div>
<svg style="left:0;top:0" width="2392" height="1844" viewBox="0 0 2392 1844"><path d="M1283.8 1004.2 H2336" stroke="#e7e7e7" stroke-width="1.7" fill="none"/><path d="M1283.8 1033.6 H2336" stroke="#e7e7e7" stroke-width="1.7" fill="none"/><path d="M1283.8 1063.0 H2336" stroke="#e7e7e7" stroke-width="1.7" fill="none"/><path d="M1283.8 1092.4 H2336" stroke="#e7e7e7" stroke-width="1.7" fill="none"/><path d="M1283.8 1121.8 H2336" stroke="#e7e7e7" stroke-width="1.7" fill="none"/><path d="M1283.8 1151.2 H2336" stroke="#e7e7e7" stroke-width="1.7" fill="none"/><path d="M1283.8 1180.6 H2336" stroke="#e7e7e7" stroke-width="1.7" fill="none"/><path d="M1295.8 1180.6 H2336" stroke="#d6d6d6" stroke-width="1.7" fill="none"/><path d="M1295.8 1004.2 V1192.6" stroke="#e7e7e7" stroke-width="1.7" fill="none"/><path d="M1295.8 1004.2 V1180.6" stroke="#d6d6d6" stroke-width="1.7" fill="none"/><path d="M1469.2 1004.2 V1192.6" stroke="#e7e7e7" stroke-width="1.7" fill="none"/><path d="M1642.5 1004.2 V1192.6" stroke="#e7e7e7" stroke-width="1.7" fill="none"/><path d="M1815.9 1004.2 V1192.6" stroke="#e7e7e7" stroke-width="1.7" fill="none"/><path d="M1989.3 1004.2 V1192.6" stroke="#e7e7e7" stroke-width="1.7" fill="none"/><path d="M2162.6 1004.2 V1192.6" stroke="#e7e7e7" stroke-width="1.7" fill="none"/><path d="M2336.0 1004.2 V1192.6" stroke="#e7e7e7" stroke-width="1.7" fill="none"/><path d="M1321.8 1179.8 V1039.2 Q1321.8 1031.2 1329.8 1031.2 H1435.2 Q1443.2 1031.2 1443.2 1039.2 V1179.8" fill="#a59df9" stroke="#6658f5" stroke-width="3" stroke-linejoin="round"/><path d="M1495.1 1179.8 V1039.2 Q1495.1 1031.2 1503.1 1031.2 H1608.5 Q1616.5 1031.2 1616.5 1039.2 V1179.8" fill="#a59df9" stroke="#6658f5" stroke-width="3" stroke-linejoin="round"/><path d="M1668.5 1179.8 V1050.2 Q1668.5 1042.2 1676.5 1042.2 H1781.9 Q1789.9 1042.2 1789.9 1050.2 V1179.8" fill="#a59df9" stroke="#6658f5" stroke-width="3" stroke-linejoin="round"/><path d="M1841.9 1179.8 V1050.2 Q1841.9 1042.2 1849.9 1042.2 H1955.3 Q1963.3 1042.2 1963.3 1050.2 V1179.8" fill="#a59df9" stroke="#6658f5" stroke-width="3" stroke-linejoin="round"/><path d="M2015.2 1179.8 V1123.7 Q2015.2 1115.7 2023.2 1115.7 H2128.6 Q2136.6 1115.7 2136.6 1123.7 V1179.8" fill="#a59df9" stroke="#6658f5" stroke-width="3" stroke-linejoin="round"/><path d="M2188.6 1179.8 V1123.7 Q2188.6 1115.7 2196.6 1115.7 H2302.0 Q2310.0 1115.7 2310.0 1123.7 V1179.8" fill="#a59df9" stroke="#6658f5" stroke-width="3" stroke-linejoin="round"/></svg>
<div class="t" style="left:1222.38px;top:992.90px;font-size:17.3px;font-weight:400;color:#666;line-height:22px;">R$ 120</div>
<div class="t" style="left:1222.38px;top:1022.30px;font-size:17.3px;font-weight:400;color:#666;line-height:22px;">R$ 100</div>
<div class="t" style="left:1232.00px;top:1051.70px;font-size:17.3px;font-weight:400;color:#666;line-height:22px;">R$ 80</div>
<div class="t" style="left:1232.00px;top:1081.10px;font-size:17.3px;font-weight:400;color:#666;line-height:22px;">R$ 60</div>
<div class="t" style="left:1232.00px;top:1110.50px;font-size:17.3px;font-weight:400;color:#666;line-height:22px;">R$ 40</div>
<div class="t" style="left:1232.00px;top:1139.90px;font-size:17.3px;font-weight:400;color:#666;line-height:22px;">R$ 20</div>
<div class="t" style="left:1241.50px;top:1169.30px;font-size:17.3px;font-weight:400;color:#666;line-height:22px;">R$ 0</div>
<div class="t" style="left:1360.30px;top:1195.80px;font-size:17.8px;font-weight:400;color:#666;line-height:23px;">02/26</div>
<div class="t" style="left:1374.17px;top:984.37px;font-size:13px;font-weight:700;color:#222;line-height:17px;">R$</div>
<div class="t" style="left:1362.61px;top:1000.67px;font-size:13px;font-weight:700;color:#222;line-height:17px;">102,47</div>
<div class="t" style="left:1533.66px;top:1195.80px;font-size:17.8px;font-weight:400;color:#666;line-height:23px;">03/26</div>
<div class="t" style="left:1547.54px;top:984.37px;font-size:13px;font-weight:700;color:#222;line-height:17px;">R$</div>
<div class="t" style="left:1535.97px;top:1000.67px;font-size:13px;font-weight:700;color:#222;line-height:17px;">102,47</div>
<div class="t" style="left:1707.03px;top:1195.80px;font-size:17.8px;font-weight:400;color:#666;line-height:23px;">04/26</div>
<div class="t" style="left:1720.90px;top:995.39px;font-size:13px;font-weight:700;color:#222;line-height:17px;">R$</div>
<div class="t" style="left:1712.97px;top:1011.69px;font-size:13px;font-weight:700;color:#222;line-height:17px;">94,97</div>
<div class="t" style="left:1880.40px;top:1195.80px;font-size:17.8px;font-weight:400;color:#666;line-height:23px;">05/26</div>
<div class="t" style="left:1894.27px;top:995.39px;font-size:13px;font-weight:700;color:#222;line-height:17px;">R$</div>
<div class="t" style="left:1886.33px;top:1011.69px;font-size:13px;font-weight:700;color:#222;line-height:17px;">94,97</div>
<div class="t" style="left:2053.76px;top:1195.80px;font-size:17.8px;font-weight:400;color:#666;line-height:23px;">06/26</div>
<div class="t" style="left:2067.64px;top:1068.89px;font-size:13px;font-weight:700;color:#222;line-height:17px;">R$</div>
<div class="t" style="left:2059.70px;top:1085.19px;font-size:13px;font-weight:700;color:#222;line-height:17px;">44,97</div>
<div class="t" style="left:2227.13px;top:1195.80px;font-size:17.8px;font-weight:400;color:#666;line-height:23px;">07/26</div>
<div class="t" style="left:2241.00px;top:1068.89px;font-size:13px;font-weight:700;color:#222;line-height:17px;">R$</div>
<div class="t" style="left:2233.07px;top:1085.19px;font-size:13px;font-weight:700;color:#222;line-height:17px;">44,97</div>
<div class="b" style="left:1703.2px;top:969.6px;width:62.7px;height:20.8px;background:#a39bf8;border:2.6px solid #6555f2;"></div>
<div class="t" style="left:1774.00px;top:969.90px;font-size:17px;font-weight:400;color:#666;line-height:22px;">Total (R$)</div>
<div class="b" style="left:1217px;top:1246.4px;width:1119px;height:1.5px;background:#d2d2d4;"></div>
<div class="t" style="left:1217.70px;top:1297.00px;font-size:22px;font-weight:700;color:#4d5156;line-height:29px;transform:scaleX(1.1000);transform-origin:0 50%;">02/26</div>
<div class="t" style="left:1217.70px;top:1329.10px;font-size:21px;font-weight:400;color:#55595e;line-height:27px;transform:scaleX(0.9868);transform-origin:0 50%;">R$ 102,47</div>
<div class="t" style="left:1351.00px;top:1297.00px;font-size:22px;font-weight:700;color:#4d5156;line-height:29px;transform:scaleX(1.1000);transform-origin:0 50%;">03/26</div>
<div class="t" style="left:1351.00px;top:1329.10px;font-size:21px;font-weight:400;color:#55595e;line-height:27px;transform:scaleX(0.9868);transform-origin:0 50%;">R$ 102,47</div>
<div class="t" style="left:1484.40px;top:1297.00px;font-size:22px;font-weight:700;color:#4d5156;line-height:29px;transform:scaleX(1.1000);transform-origin:0 50%;">04/26</div>
<div class="t" style="left:1484.40px;top:1329.10px;font-size:21px;font-weight:400;color:#55595e;line-height:27px;transform:scaleX(1.0088);transform-origin:0 50%;">R$ 94,97</div>
<div class="t" style="left:1607.80px;top:1297.00px;font-size:22px;font-weight:700;color:#4d5156;line-height:29px;transform:scaleX(1.1000);transform-origin:0 50%;">05/26</div>
<div class="t" style="left:1607.80px;top:1329.10px;font-size:21px;font-weight:400;color:#55595e;line-height:27px;transform:scaleX(1.0088);transform-origin:0 50%;">R$ 94,97</div>
<div class="t" style="left:1731.60px;top:1297.00px;font-size:22px;font-weight:700;color:#4d5156;line-height:29px;transform:scaleX(1.1000);transform-origin:0 50%;">06/26</div>
<div class="t" style="left:1731.60px;top:1329.10px;font-size:21px;font-weight:400;color:#55595e;line-height:27px;transform:scaleX(1.0088);transform-origin:0 50%;">R$ 44,97</div>
<div class="t" style="left:1855.00px;top:1297.00px;font-size:22px;font-weight:700;color:#4d5156;line-height:29px;transform:scaleX(1.1000);transform-origin:0 50%;">07/26</div>
<div class="t" style="left:1855.00px;top:1329.10px;font-size:21px;font-weight:400;color:#55595e;line-height:27px;transform:scaleX(1.0088);transform-origin:0 50%;">R$ 44,97</div>
<div class="b" style="left:1193px;top:1431px;width:1167px;height:500px;background:#fff;border-radius:26px;box-shadow:0 2px 10px rgba(0,0,0,.04);"></div>
<svg style="left:1217.1px;top:1457px" width="24" height="24" viewBox="0 0 16 16" fill="#212529"><path d="M0 4a2 2 0 0 1 2-2h12a2 2 0 0 1 2 2v8a2 2 0 0 1-2 2H2a2 2 0 0 1-2-2zm2-1a1 1 0 0 0-1 1v1h14V4a1 1 0 0 0-1-1zm13 4H1v5a1 1 0 0 0 1 1h12a1 1 0 0 0 1-1z"/><path d="M2 10a1 1 0 0 1 1-1h1a1 1 0 0 1 1 1v1a1 1 0 0 1-1 1H3a1 1 0 0 1-1-1z"/></svg>
<div class="t" style="left:1254.00px;top:1454.40px;font-size:23px;font-weight:700;color:#212529;line-height:30px;transform:scaleX(1.0262);transform-origin:0 50%;">Seus cartões</div>
<div class="b" style="left:1217.1px;top:1507px;width:349.2px;height:254.8px;background:#d1d3dc;border-radius:25px;box-shadow:0 10px 22px rgba(20,20,60,.14);border:1.2px solid #c2c4ce;"><div style="position:absolute;left:-1.2px;top:-1.2px"><div style="position:absolute;left:23.3px;top:27.1px;width:39px;height:38.9px;background:#be3531;overflow:hidden"><svg style="left:0;top:0" width="39" height="38.9" viewBox="0 0 39 38.9"><g fill="#e3e8ec"><path d="M2.1 13.4 Q7 11.8 9.6 9 Q14 4 20 3.1 Q26 3.4 30.5 8.5 Q25 5.7 20.4 5.9 Q14.6 6.4 11.6 10.6 Q8.7 14.6 8.8 19.1 Q8.9 23.6 10.6 27.6 Q6.4 23 6.6 18 Q6.8 14.4 8.3 11.9 Q5 13.3 2.1 13.4Z"/><path d="M11.6 10.3 Q17 9.8 22 11.1 Q27 12.3 30.6 14.8 Q35.4 18 36.2 21 Q36.4 25 30.8 27.7 Q34.6 24 34 21.6 Q32.6 18.6 29.5 17 Q25.4 14 22 13.3 Q17.6 12.3 13.4 11.8Z"/><rect x="15.8" y="27.9" width="1.9" height="11"/><rect x="19.3" y="22.9" width="3.3" height="16"/></g></svg></div><div style="position:absolute;left:263.9px;top:25px;width:60.2px;height:41.8px;border-radius:9.5px;background:linear-gradient(180deg,#e8bd7a 0%,#dcab66 50%,#d09c58 100%);box-shadow:0 1px 3px rgba(0,0,0,.28)"></div></div></div>
<div class="t" style="left:1243.00px;top:1615.40px;font-size:26px;font-weight:700;color:#111;line-height:34px;transform:scaleX(1.0195);transform-origin:0 50%;">Gol Smiles</div>
<div class="b" style="left:1244.3px;top:1671.8px;width:8.2px;height:8.2px;background:#111;border-radius:50%;opacity:0.88;"></div>
<div class="b" style="left:1261.1px;top:1671.8px;width:8.2px;height:8.2px;background:#111;border-radius:50%;opacity:0.88;"></div>
<div class="b" style="left:1277.8999999999999px;top:1671.8px;width:8.2px;height:8.2px;background:#111;border-radius:50%;opacity:0.88;"></div>
<div class="b" style="left:1294.7px;top:1671.8px;width:8.2px;height:8.2px;background:#111;border-radius:50%;opacity:0.88;"></div>
<div class="t" style="left:1326.00px;top:1660.30px;font-size:26px;font-weight:400;color:#111;line-height:34px;font-family:'Liberation Mono',monospace;transform:scaleX(1.0132);transform-origin:0 50%;opacity:0.88;">6655</div>
<div class="t" style="left:1243.00px;top:1709.80px;font-size:20px;font-weight:400;color:#44474c;line-height:26px;transform:scaleX(1.0200);transform-origin:0 50%;">Venc.</div>
<div class="t" style="left:1306.80px;top:1709.80px;font-size:20px;font-weight:700;color:#111;line-height:26px;transform:scaleX(1.0247);transform-origin:0 50%;">10</div>
<div class="t" style="left:1358.50px;top:1709.80px;font-size:20px;font-weight:400;color:#44474c;line-height:26px;">Fech.</div>
<div class="t" style="left:1421.70px;top:1709.80px;font-size:20px;font-weight:700;color:#111;line-height:26px;transform:scaleX(1.1371);transform-origin:0 50%;">29</div>
<div class="b" style="left:1602px;top:1507px;width:349.2px;height:254.8px;background:#0d0d0d;border-radius:25px;box-shadow:0 10px 22px rgba(20,20,60,.14);"><div style="position:absolute;left:0px;top:0px"><svg style="left:0;top:0" width="100" height="80" viewBox="1602 1507 100 80"><g fill="#f08030"><circle cx="1633.4" cy="1540.5" r="4.1"/><rect x="1629.8" y="1546.4" width="7.5" height="26.4"/><rect x="1625.3" y="1546.4" width="6" height="6"/><path d="M1641.3 1572.8 V1545.6 H1648.7 V1549.6 Q1651.6 1544.6 1657 1544.6 Q1665.1 1544.6 1665.1 1554 V1572.8 H1657.7 V1555.2 Q1657.7 1551 1653.8 1551 Q1648.7 1551 1648.7 1557 V1572.8Z"/></g></svg><div style="position:absolute;left:263.9px;top:25px;width:60.2px;height:41.8px;border-radius:9.5px;background:linear-gradient(180deg,#e8bd7a 0%,#dcab66 50%,#d09c58 100%);box-shadow:0 1px 3px rgba(0,0,0,.28)"></div></div></div>
<div class="t" style="left:1627.90px;top:1615.40px;font-size:26px;font-weight:700;color:#fff;line-height:34px;transform:scaleX(1.0945);transform-origin:0 50%;">Inter</div>
<div class="b" style="left:1629.2px;top:1671.8px;width:8.2px;height:8.2px;background:#fff;border-radius:50%;opacity:0.9;"></div>
<div class="b" style="left:1646.0px;top:1671.8px;width:8.2px;height:8.2px;background:#fff;border-radius:50%;opacity:0.9;"></div>
<div class="b" style="left:1662.8px;top:1671.8px;width:8.2px;height:8.2px;background:#fff;border-radius:50%;opacity:0.9;"></div>
<div class="b" style="left:1679.6000000000001px;top:1671.8px;width:8.2px;height:8.2px;background:#fff;border-radius:50%;opacity:0.9;"></div>
<div class="t" style="left:1710.90px;top:1660.30px;font-size:26px;font-weight:400;color:#fff;line-height:34px;font-family:'Liberation Mono',monospace;transform:scaleX(1.0132);transform-origin:0 50%;opacity:0.9;">4242</div>
<div class="t" style="left:1627.90px;top:1709.80px;font-size:20px;font-weight:400;color:#e4e4e4;line-height:26px;transform:scaleX(1.0200);transform-origin:0 50%;">Venc.</div>
<div class="t" style="left:1691.70px;top:1709.80px;font-size:20px;font-weight:700;color:#fff;line-height:26px;transform:scaleX(1.0562);transform-origin:0 50%;">10</div>
<div class="t" style="left:1743.40px;top:1709.80px;font-size:20px;font-weight:400;color:#e4e4e4;line-height:26px;">Fech.</div>
<div class="t" style="left:1806.60px;top:1709.80px;font-size:20px;font-weight:700;color:#fff;line-height:26px;transform:scaleX(1.1506);transform-origin:0 50%;">30</div>
<div class="b" style="left:1987px;top:1507px;width:349.2px;height:254.8px;background:#763de4;border-radius:25px;box-shadow:0 10px 22px rgba(20,20,60,.14);"><div style="position:absolute;left:0px;top:0px"><div style="position:absolute;left:23.2px;top:27.1px;width:39.7px;height:38.9px;background:#7a1bcc"><svg style="left:0;top:0" width="39.7" height="38.9" viewBox="0 0 39.7 38.9"><g fill="none" stroke="#fff" stroke-width="3.4"><path d="M9.1 26 V18.5 Q9.1 14.3 13.3 14.3 Q17.5 14.3 17.5 18.5 V26"/><path d="M21.8 12.9 V20.5 Q21.8 24.7 26 24.7 Q30.2 24.7 30.2 20.5 V12.9"/></g></svg></div><div style="position:absolute;left:263.9px;top:25px;width:60.2px;height:41.8px;border-radius:9.5px;background:linear-gradient(180deg,#e8bd7a 0%,#dcab66 50%,#d09c58 100%);box-shadow:0 1px 3px rgba(0,0,0,.28)"></div></div></div>
<div class="t" style="left:2012.90px;top:1615.40px;font-size:26px;font-weight:700;color:#fff;line-height:34px;">NU</div>
<div class="b" style="left:2014.2px;top:1671.8px;width:8.2px;height:8.2px;background:#fff;border-radius:50%;opacity:0.9;"></div>
<div class="b" style="left:2031.0px;top:1671.8px;width:8.2px;height:8.2px;background:#fff;border-radius:50%;opacity:0.9;"></div>
<div class="b" style="left:2047.8px;top:1671.8px;width:8.2px;height:8.2px;background:#fff;border-radius:50%;opacity:0.9;"></div>
<div class="b" style="left:2064.6px;top:1671.8px;width:8.2px;height:8.2px;background:#fff;border-radius:50%;opacity:0.9;"></div>
<div class="t" style="left:2095.90px;top:1660.30px;font-size:26px;font-weight:400;color:#fff;line-height:34px;font-family:'Liberation Mono',monospace;transform:scaleX(1.0132);transform-origin:0 50%;opacity:0.9;">6555</div>
<div class="t" style="left:2012.90px;top:1709.80px;font-size:20px;font-weight:400;color:#e6dcfb;line-height:26px;transform:scaleX(1.0200);transform-origin:0 50%;">Venc.</div>
<div class="t" style="left:2077.40px;top:1709.80px;font-size:20px;font-weight:700;color:#fff;line-height:26px;transform:scaleX(1.0517);transform-origin:0 50%;">5</div>
<div class="t" style="left:2117.50px;top:1709.80px;font-size:20px;font-weight:400;color:#e6dcfb;line-height:26px;">Fech.</div>
<div class="t" style="left:2180.50px;top:1709.80px;font-size:20px;font-weight:700;color:#fff;line-height:26px;transform:scaleX(1.0337);transform-origin:0 50%;">10</div>
<div class="b" style="left:1217.3px;top:1786.2px;width:225.4px;height:45.4px;border:1.6px solid #3877f0;border-radius:7px;background:#fff;"></div>
<div class="t" style="left:1342.00px;top:1794.50px;font-size:20.5px;font-weight:400;color:#2f6ff0;line-height:27px;transform:scaleX(1.0562);transform-origin:0 50%;">s cartões</div>
<div class="b" style="left:2300.2px;top:1732.2px;width:83.6px;height:83.6px;background:#6560f5;border-radius:50%;box-shadow:0 10px 20px rgba(40,40,120,.35);"></div>
<svg style="left:2329.85px;top:1761.85px" width="24.4" height="24.4" viewBox="0 0 16 16" fill="#fff"><path fill-rule="evenodd" d="M8 2a.5.5 0 0 1 .5.5v5h5a.5.5 0 0 1 0 1h-5v5a.5.5 0 0 1-1 0v-5h-5a.5.5 0 0 1 0-1h5v-5A.5.5 0 0 1 8 2"/></svg>
<div class="b" style="left:1086.3px;top:1776.3px;width:252px;height:50.7px;background:rgba(253,253,255,.94);border-radius:25.4px;box-shadow:0 10px 44px rgba(0,0,0,.2),0 2px 10px rgba(0,0,0,.1),0 0 0 1.5px rgba(255,255,255,.95) inset;backdrop-filter:blur(6px);overflow:hidden;"><div style="position:absolute;left:129px;top:0;width:130px;height:51px;background:linear-gradient(90deg,rgba(228,238,253,0) 0,rgba(228,238,253,.5) 5px,rgba(234,241,254,.45) 100%)"></div><div style="position:absolute;left:145px;top:26px;width:95px;height:9px;background:rgba(150,185,250,.33);filter:blur(3.5px)"></div><div style="position:absolute;left:135px;top:44px;width:110px;height:3px;background:rgba(150,185,250,.4);filter:blur(2px)"></div><div style="position:absolute;left:135px;top:8.5px;width:110px;height:3px;background:rgba(150,185,250,.35);filter:blur(2px)"></div></div>
<svg style="left:1201px;top:1826.5px" width="28.6" height="14" viewBox="0 0 28.6 14"><path d="M0 0 Q8.6 1.4 12.4 11.6 Q14.3 15 16.2 11.6 Q20 1.4 28.6 0Z" fill="rgba(250,251,255,.96)"/><path d="M14.6 0 H28.6 Q20 1.4 16.2 11.6 Q15.4 13 14.6 13.6Z" fill="rgba(222,233,253,.6)"/></svg>
<div class="t" style="left:1113.30px;top:1785.50px;font-size:26px;font-weight:400;color:#222;line-height:34px;transform:scaleX(1.1058);transform-origin:0 50%;">Captura de Tela</div>
</body></html>
